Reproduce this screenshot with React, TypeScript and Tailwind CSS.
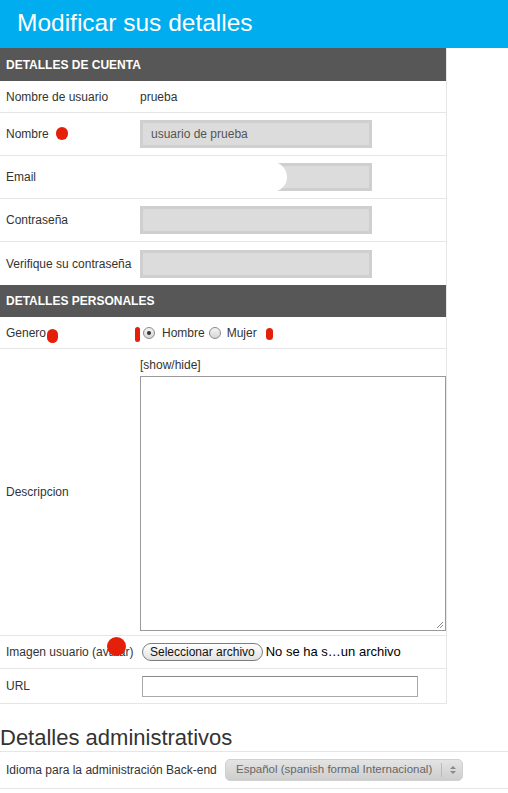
import React from "react";

const Label = ({ children }: { children: React.ReactNode }) => (
  <div className="w-[140px] shrink-0 pl-[6px] text-[12px] text-[#333]">{children}</div>
);

const GrayInput = ({ value }: { value?: string }) => (
  <div className="w-[232px] h-[28px] border-[3px] border-[#cfcfcf] bg-[#dcdcdc] flex items-center pl-[8px] text-[12px] text-[#555]">
    {value}
  </div>
);

const Radio = ({ checked }: { checked?: boolean }) => (
  <span className="inline-flex w-[12px] h-[12px] rounded-full border border-[#8a8a8a] bg-gradient-to-b from-[#f4f4f4] to-[#d6d6d6] items-center justify-center">
    {checked && <span className="w-[4px] h-[4px] rounded-full bg-[#333]" />}
  </span>
);

export default function App() {
  return (
    <div className="w-[508px] min-h-[793px] bg-white font-['Liberation_Sans',Arial,sans-serif] text-[#333]">
      <div className="h-[48px] bg-[#00adef] flex items-center pl-[17px] text-white text-[24.5px] leading-none pb-[2px]">
        Modificar sus detalles
      </div>
      <div className="w-[447px] border-r border-[#e6e6e6]">
        <div className="h-[33px] bg-[#575757] text-white font-bold text-[12px] pl-[6px] flex items-center">
          DETALLES DE CUENTA
        </div>
        <div className="h-[32px] border-b border-[#e6e6e6] flex items-center">
          <Label>Nombre de usuario</Label>
          <div className="text-[12px] text-[#333]">prueba</div>
        </div>
        <div className="h-[43px] border-b border-[#e6e6e6] flex items-center relative">
          <Label>Nombre</Label>
          <GrayInput value="usuario de prueba" />
          <span className="absolute left-[56px] top-[14px] w-[12px] h-[13px] rounded-full bg-[#e4200b]" />
        </div>
        <div className="h-[43px] border-b border-[#e6e6e6] flex items-center">
          <Label>Email</Label>
          <div className="relative">
            <GrayInput />
            <span className="absolute left-0 top-[-1px] w-[147px] h-[30px] bg-white rounded-r-full" />
          </div>
        </div>
        <div className="h-[43px] border-b border-[#e6e6e6] flex items-center">
          <Label>Contraseña</Label>
          <GrayInput />
        </div>
        <div className="h-[43px] flex items-center">
          <Label>Verifique su contraseña</Label>
          <GrayInput />
        </div>
        <div className="h-[32px] bg-[#575757] text-white font-bold text-[12px] pl-[6px] flex items-center">
          DETALLES PERSONALES
        </div>
        <div className="h-[32px] border-b border-[#e6e6e6] flex items-center relative">
          <Label>Genero</Label>
          <div className="flex items-center text-[12px] text-[#333] pl-[3px]">
            <Radio checked />
            <span className="ml-[7px]">Hombre</span>
            <span className="ml-[4px] flex"><Radio /></span>
            <span className="ml-[6px]">Mujer</span>
          </div>
          <span className="absolute left-[47px] top-[12px] w-[11px] h-[14px] rounded-full bg-[#e4200b]" />
          <span className="absolute left-[135px] top-[10px] w-[5px] h-[15px] rounded-full bg-[#e4200b]" />
          <span className="absolute left-[266px] top-[11px] w-[7px] h-[12px] rounded-full bg-[#e4200b]" />
        </div>
        <div className="h-[287px] border-b border-[#e6e6e6] flex items-center">
          <Label>Descripcion</Label>
          <div className="flex-1 flex flex-col">
            <div className="text-[12px] text-[#333] h-[22px] flex items-center">[show/hide]</div>
            <div className="relative h-[255px] border border-[#9a9a9a] bg-white">
              <svg className="absolute right-[1px] bottom-[1px]" width="8" height="8" viewBox="0 0 8 8">
                <line x1="1" y1="7" x2="7" y2="1" stroke="#888" strokeWidth="1" />
                <line x1="4" y1="7" x2="7" y2="4" stroke="#888" strokeWidth="1" />
              </svg>
            </div>
          </div>
        </div>
        <div className="h-[33px] border-b border-[#e6e6e6] flex items-center relative">
          <Label>Imagen usuario (avatar)</Label>
          <div className="flex items-center pl-[2px]">
            <div className="h-[18px] px-[7px] rounded-full border border-[#7d7d7d] bg-gradient-to-b from-[#ffffff] to-[#e2e2e2] text-[12px] text-[#111] flex items-center">
              Seleccionar archivo
            </div>
            <span className="ml-[3px] text-[13px] text-black">No se ha s…un archivo</span>
          </div>
          <span className="absolute left-[107px] top-[1px] w-[19px] h-[19px] rounded-full bg-[#e4200b]" />
        </div>
        <div className="h-[35px] border-b border-[#e6e6e6] flex items-center">
          <Label>URL</Label>
          <div className="ml-[2px] w-[276px] h-[21px] border border-[#a9a9a9] border-t-[#8a8a8a] bg-white" />
        </div>
      </div>
      <div className="mt-[23px] text-[22px] text-[#333] leading-none h-[24px]">Detalles administrativos</div>
      <div className="h-[38px] border-y border-[#e6e6e6] flex items-center">
        <div className="w-[225px] shrink-0 pl-[6px] text-[12px] text-[#333]">Idioma para la administración Back-end</div>
        <div className="w-[238px] h-[22px] rounded-[5px] bg-gradient-to-b from-[#e4e4e4] to-[#cdcdcd] border border-[#d0d0d0] flex items-center text-[11.5px] text-[#666]">
          <span className="pl-[10px] w-[215px] whitespace-nowrap overflow-hidden">Español (spanish formal Internacional)</span>
          <span className="h-[14px] w-px bg-[#bbb]" />
          <svg className="ml-[8px]" width="6" height="10" viewBox="0 0 6 10">
            <path d="M0 4 L3 1 L6 4 Z" fill="#888" />
            <path d="M0 6 L3 9 L6 6 Z" fill="#888" />
          </svg>
        </div>
      </div>
    </div>
  );
}
